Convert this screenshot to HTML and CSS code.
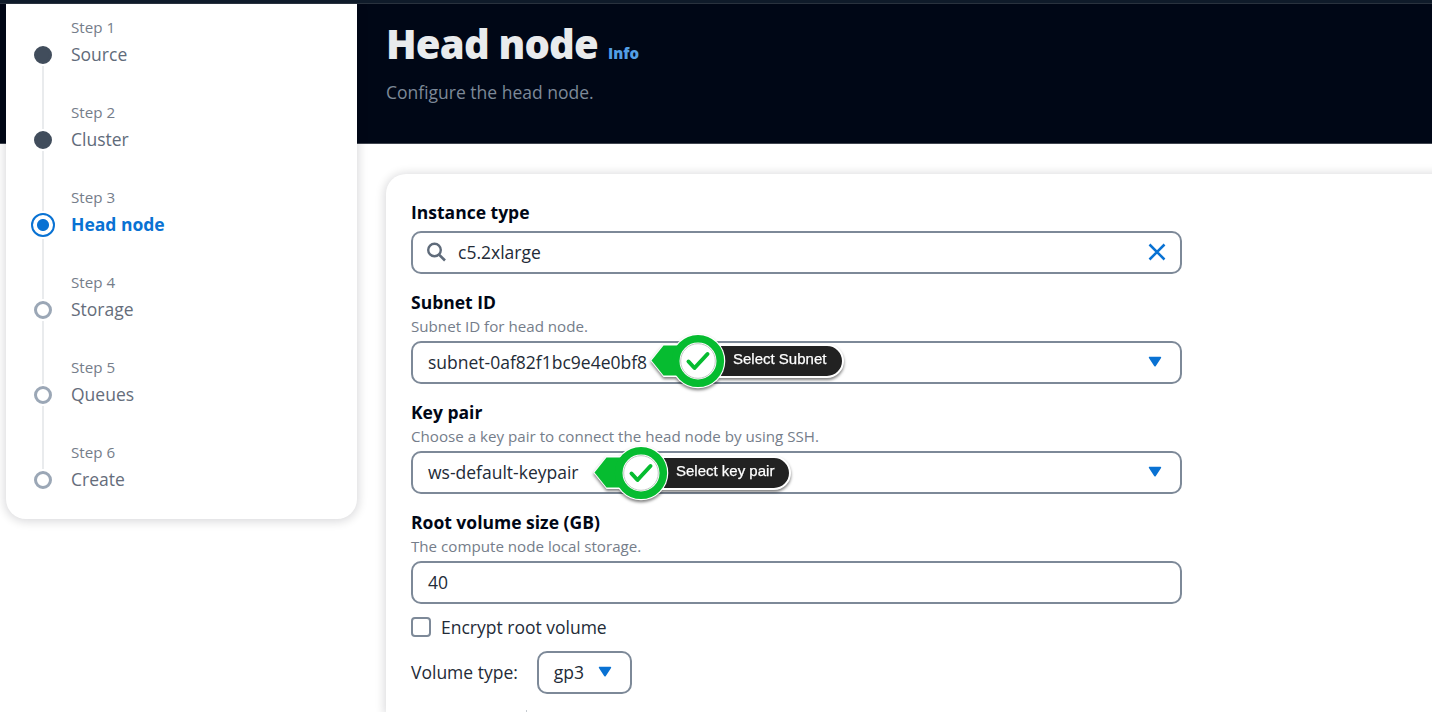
FILE: index.html
```html
<!DOCTYPE html>
<html lang="en">
<head>
<meta charset="utf-8">
<title>Head node</title>
<link rel="stylesheet" href="styles.css">
</head>
<body>
<svg class="defs" width="0" height="0">
  <symbol id="caret" viewBox="0 0 14 12"><path d="M1.600 1.500h10.800L7 9.700z" fill="#0972d3" stroke="#0972d3" stroke-width="1.600" stroke-linejoin="round"/></symbol>
  <symbol id="marker" viewBox="0 0 90 64">
    <path d="M4.500 30.500L17 15h34v31H17z" fill="#fff" stroke="#fff" stroke-width="2"/>
    <circle cx="51" cy="31" r="27.300" fill="#fff"/>
    <path d="M4.500 30.500L16.500 15.500H40v30H16.500z" fill="#06bc30"/>
    <circle cx="51" cy="31" r="22.300" fill="#fff" stroke="#06bc30" stroke-width="7.600"/>
    <circle cx="51" cy="31" r="17.300" fill="none" stroke="#c3c9c5" stroke-width="1"/>
    <path d="M41.500 31.500l6 6.500 13-14" fill="none" stroke="#06bc30" stroke-width="4" stroke-linecap="round" stroke-linejoin="round"/>
  </symbol>
</svg>
<div class="topbar"></div>
<div class="layout">
  <nav class="steps">
    <div class="step done"><span class="dot"></span><div class="num">Step 1</div><div class="name">Source</div></div>
    <div class="step done"><span class="dot"></span><div class="num">Step 2</div><div class="name">Cluster</div></div>
    <div class="step active"><span class="dot"></span><div class="num">Step 3</div><div class="name">Head node</div></div>
    <div class="step"><span class="dot"></span><div class="num">Step 4</div><div class="name">Storage</div></div>
    <div class="step"><span class="dot"></span><div class="num">Step 5</div><div class="name">Queues</div></div>
    <div class="step"><span class="dot"></span><div class="num">Step 6</div><div class="name">Create</div></div>
  </nav>
  <main class="main">
    <header class="header">
      <h1 class="title"><span class="title-text">Head node</span><a class="info">Info</a></h1>
      <p class="subtitle">Configure the head node.</p>
    </header>
    <section class="card">
      <div class="field">
        <div class="label">Instance type</div>
        <div class="input search">
          <svg class="search-icon" width="20" height="20" viewBox="0 0 20 20"><circle cx="7.500" cy="8" r="6.300" fill="none" stroke="#5f6b7a" stroke-width="2.400"/><path d="M12 12.600l6 5.900" stroke="#5f6b7a" stroke-width="2.600"/></svg>
          <span>c5.2xlarge</span>
          <svg class="clear" width="18" height="18" viewBox="0 0 18 18"><path d="M1.500 1.500l15 15M16.500 1.500l-15 15" stroke="#0972d3" stroke-width="2.500"/></svg>
        </div>
      </div>
      <div class="field">
        <div class="label">Subnet ID</div>
        <div class="hint">Subnet ID for head node.</div>
        <div class="input">
          <span>subnet-0af82f1bc9e4e0bf8</span>
          <svg class="caret" width="14" height="12"><use href="#caret"/></svg>
          <div class="callout subnet"><div class="pill">Select Subnet</div><svg class="marker" width="90" height="64"><use href="#marker"/></svg></div>
        </div>
      </div>
      <div class="field">
        <div class="label">Key pair</div>
        <div class="hint">Choose a key pair to connect the head node by using SSH.</div>
        <div class="input">
          <span>ws-default-keypair</span>
          <svg class="caret" width="14" height="12"><use href="#caret"/></svg>
          <div class="callout keypair"><div class="pill">Select key pair</div><svg class="marker" width="90" height="64"><use href="#marker"/></svg></div>
        </div>
      </div>
      <div class="field">
        <div class="label">Root volume size (GB)</div>
        <div class="hint">The compute node local storage.</div>
        <div class="input"><span>40</span></div>
      </div>
      <div class="check"><span class="box"></span><span>Encrypt root volume</span></div>
      <div class="volume">
        <span>Volume type:</span>
        <div class="input small"><span>gp3</span><svg width="14" height="12"><use href="#caret"/></svg></div>
      </div>
      <div class="divider"></div>
    </section>
  </main>
</div>
</body>
</html>
```
FILE: styles.css
```css
* { box-sizing: border-box; }
html { background: #fff; }
body {
  margin: 0;
  height: 712px;
  overflow: hidden;
  font: 17.5px/25px "Open Sans", sans-serif;
  color: #232b37;
  background: linear-gradient(#000716 143px, #40454f 143px, #40454f 144px, #fff 144px);
}
.defs { display: block; }
.topbar { height: 4px; background: #0f1b2a; border-bottom: 1px solid #29323e; }
.layout { display: flex; align-items: flex-start; height: 708px; overflow: hidden; }
.steps {
  flex: none;
  width: 351px;
  height: 515px;
  margin-left: 6px;
  padding: 12px 0 0 65px;
  background: #fff;
  border-radius: 0 0 20px 20px;
  box-shadow: 0 1px 10px 2px rgba(0, 7, 22, .14);
  clip-path: inset(0 -20px -20px -20px);
}
.step { position: relative; height: 85px; color: #687078; }
.num { font-size: 15.15px; line-height: 22px; color: #757d8a; }
.name { line-height: 25px; margin-top: 4px; color: #656d7b; }
.step.done .name { color: #5f6b7a; }
.step.active .name { color: #0972d3; font-weight: 700; }
.step:not(:last-child)::after {
  content: "";
  position: absolute;
  left: -29px;
  top: 50px;
  width: 2px;
  height: 63px;
  background: #e9ebed;
}
.step.active::after { top: 53px; height: 60px; }
.step:nth-child(2)::after { height: 60px; }
.dot {
  position: absolute;
  left: -37px;
  top: 30px;
  width: 18px;
  height: 18px;
  border: 3px solid #9ba7b6;
  border-radius: 50%;
}
.done .dot { background: #414d5c; border-color: #414d5c; }
.active .dot {
  left: -40px;
  top: 27px;
  width: 24px;
  height: 24px;
  border: 2px solid #0972d3;
  background: radial-gradient(circle, #0972d3 5.500px, #fff 6.500px);
}
.main { flex: none; width: 1119px; padding-left: 29px; }
.header { height: 170px; padding-top: 15px; }
.title { display: flex; align-items: baseline; gap: 10px; margin: 0; font-size: 40px; line-height: 50px; font-weight: 800; color: #e9ebed; }
.title-text { letter-spacing: -.8px; }
.info { font-size: 15px; font-weight: 800; color: #539fe5; }
.subtitle { margin: 2px 0 0; color: #7d8998; }
.card {
  height: 538px;
  padding: 26px 25px 0;
  background: #fff;
  border-radius: 20px 0 0 0;
  box-shadow: 0 1px 10px 2px rgba(0, 7, 22, .14);
}
.field { width: 771px; margin-bottom: 16px; }
.label { font-weight: 700; color: #000716; }
.hint { font-size: 15.15px; line-height: 20px; margin: 1px 0 -1px; color: #757d8a; }
.input {
  position: relative;
  display: flex;
  align-items: center;
  justify-content: space-between;
  height: 43px;
  margin-top: 6px;
  padding: 0 18px 0 15px;
  border: 2px solid #7d8998;
  border-radius: 10px;
}
.input > svg { margin-bottom: 2px; }
.search { justify-content: flex-start; padding: 0 14px; }
.search-icon { margin-right: 11px; }
.clear { margin-left: auto; }
.callout { position: absolute; top: -13px; width: 200px; height: 64px; filter: drop-shadow(0 2px 1.500px rgba(0, 0, 0, .5)); }
.subnet { left: 234px; }
.keypair { left: 177px; top: -11px; }
.marker { position: absolute; left: 0; top: 0; }
.pill {
  position: absolute;
  left: 65px;
  top: 14px;
  height: 34px;
  width: 132px;
  padding-left: 19px;
  border: 2px solid #fff;
  border-radius: 0 17px 17px 0;
  background: #222;
  color: #fff;
  font: 15px/25px "Liberation Sans", sans-serif;
  -webkit-text-stroke: .25px #fff;
  white-space: nowrap;
}
.keypair .pill { width: 136px; }
.check { display: flex; align-items: center; gap: 10px; height: 25px; margin-top: -5px; }
.box { width: 20px; height: 20px; margin-bottom: 1px; border: 2px solid #7d8998; border-radius: 4px; }
.volume { display: flex; align-items: center; gap: 19px; height: 43px; margin-top: 11px; }
.small { width: 95px; margin: 0; padding-left: 15px; }
.divider { width: 1px; height: 2px; margin: 16px 0 0 115px; background: #c6cbd1; }
```
